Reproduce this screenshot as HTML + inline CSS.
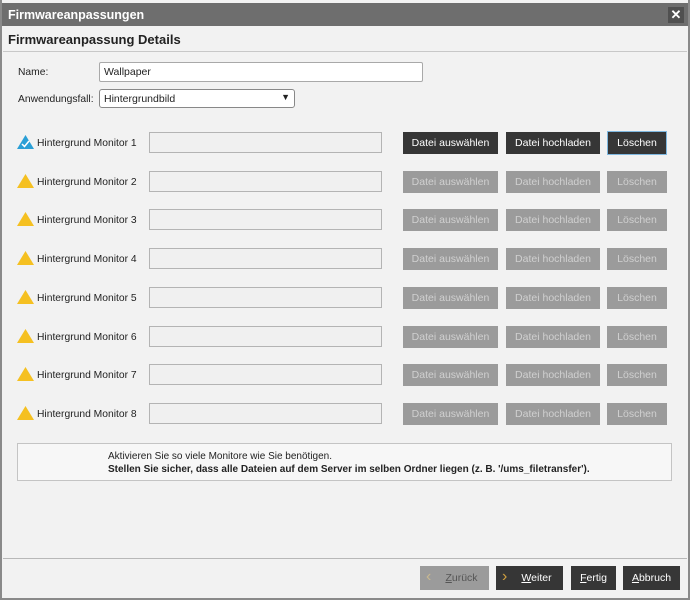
<!DOCTYPE html>
<html><head><meta charset="utf-8"><style>
*{box-sizing:border-box;margin:0;padding:0}
body{width:690px;height:600px;background:#f2f2f2;font-family:"Liberation Sans",sans-serif;font-size:10px;color:#222;position:relative;overflow:hidden}
.a{position:absolute}
.frame{left:0;top:0;width:690px;height:600px;border:2px solid #8a8a8a;border-top:none}
.title{left:2px;top:3px;width:686px;height:23px;background:#6e6e6e;color:#fff;font-weight:bold;font-size:12.5px;padding:5px 6px}
.close{left:668px;top:7px;width:16px;height:16px;background:#505050;color:#fff;font-size:13px;line-height:16px;text-align:center;font-weight:bold}
.inp{background:#fff;border:1px solid #a9a9a9;border-radius:2px;height:20px;font-size:10.5px}
.dis{background:#f0f0f0;border:1px solid #b4b4b4;height:21px;left:149px;width:233px}
.btn{height:22px;text-align:center;line-height:22px;font-size:10.5px}
.on{background:#363636;color:#fff}
.off{background:#9b9b9b;color:#d0d0d0}
.lbl{left:37px;font-size:10.3px}
</style></head><body>
<div class="a frame"></div>
<div class="a title">Firmwareanpassungen</div>
<div class="a close">✕</div>
<div class="a" style="left:8px;top:32px;font-size:13px;font-weight:bold">Firmwareanpassung Details</div>
<div class="a" style="left:3px;top:51px;width:684px;height:1px;background:#c8c8c8"></div>
<div class="a" style="left:18px;top:67px;font-size:10.3px">Name:</div>
<div class="a inp" style="left:99px;top:62px;width:324px;padding:3px 4px">Wallpaper</div>
<div class="a" style="left:18px;top:94px;font-size:10.3px">Anwendungsfall:</div>
<div class="a inp" style="left:99px;top:89px;width:196px;height:19px;border-radius:3px;border-color:#888;padding:3px 4px">Hintergrundbild<span style="position:absolute;right:4px;top:2px;font-size:9px">▼</span></div>

<svg class="a" style="left:17px;top:135px" width="17" height="14"><polygon points="8.5,0 17,14 0,14" fill="#2a9fd6"/><path d="M5 9 L7.5 11.5 L12 6" stroke="#fff" stroke-width="1.5" fill="none"/></svg>
<div class="a lbl" style="top:138px">Hintergrund Monitor 1</div>
<div class="a dis" style="top:132px"></div>
<div class="a btn on" style="left:403px;top:132px;width:95px">Datei auswählen</div>
<div class="a btn on" style="left:506px;top:132px;width:94px">Datei hochladen</div>
<div class="a btn on" style="left:607px;top:131px;width:60px;height:24px;border:1px solid #7fb8e0;line-height:22px">Löschen</div>

<div id="rows"></div>
<script>
var h='';var ys=[182,220,259,298,337,375,414];
for(var i=0;i<7;i++){var y=ys[i];
h+='<svg class="a" style="left:17px;top:'+(y-8)+'px" width="17" height="14"><polygon points="8.5,0 17,14 0,14" fill="#f5c021"/></svg>';
h+='<div class="a lbl" style="top:'+(y-5)+'px">Hintergrund Monitor '+(i+2)+'</div>';
h+='<div class="a dis" style="top:'+(y-11)+'px"></div>';
h+='<div class="a btn off" style="left:403px;top:'+(y-11)+'px;width:95px">Datei auswählen</div>';
h+='<div class="a btn off" style="left:506px;top:'+(y-11)+'px;width:94px">Datei hochladen</div>';
h+='<div class="a btn off" style="left:607px;top:'+(y-11)+'px;width:60px">Löschen</div>';}
document.getElementById('rows').innerHTML=h;
</script>

<div class="a" style="left:17px;top:443px;width:655px;height:38px;border:1px solid #c4c4c4;background:#f7f7f7"></div>
<div class="a" style="left:108px;top:451px">Aktivieren Sie so viele Monitore wie Sie benötigen.</div>
<div class="a" style="left:108px;top:464px;font-weight:bold">Stellen Sie sicher, dass alle Dateien auf dem Server im selben Ordner liegen (z. B. '/ums_filetransfer').</div>

<div class="a" style="left:3px;top:558px;width:684px;height:1px;background:#b8b8b8"></div>
<div class="a btn off" style="left:420px;top:566px;width:69px;height:24px;line-height:24px;color:#555;padding-left:14px"><span style="position:absolute;left:6px;top:-1px;color:#c8b890;font-size:16px">‹</span><u>Z</u>urück</div>
<div class="a btn on" style="left:496px;top:566px;width:67px;height:24px;line-height:24px;padding-left:14px"><span style="position:absolute;left:6px;top:-1px;color:#d0a040;font-size:16px">›</span><u>W</u>eiter</div>
<div class="a btn on" style="left:571px;top:566px;width:45px;height:24px;line-height:24px"><u>F</u>ertig</div>
<div class="a btn on" style="left:623px;top:566px;width:57px;height:24px;line-height:24px"><u>A</u>bbruch</div>
</body></html>
